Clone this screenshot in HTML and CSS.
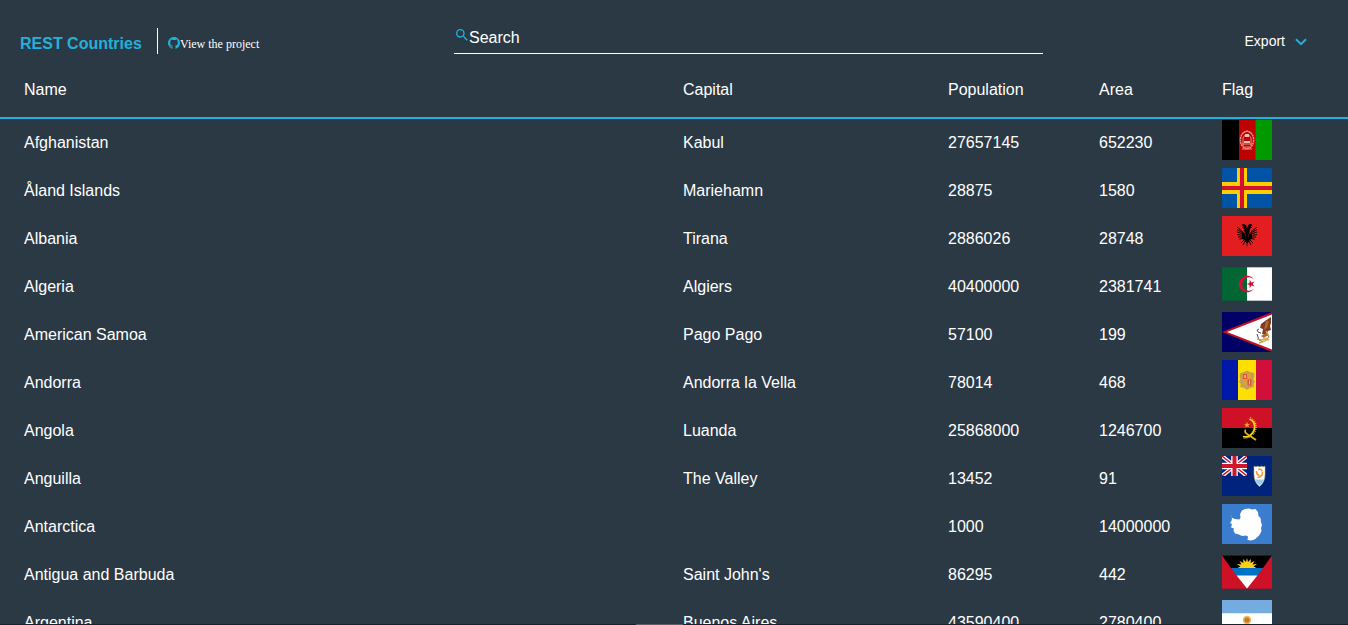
FILE: index.html
```html
<!DOCTYPE html>
<html lang="en">
<head>
<meta charset="utf-8">
<title>REST Countries</title>
<link rel="stylesheet" href="styles.css">
</head>
<body>
<div class="app">
  <header class="topbar">
    <div class="brand">
      <h1 class="title">REST Countries</h1>
      <a class="project"><svg class="github" viewBox="0 0 16 16"><path d="M8 0C3.580 0 0 3.580 0 8c0 3.540 2.290 6.530 5.470 7.590.4.070.55-.17.55-.38v-1.490c-2.010.37-2.530-.49-2.690-.94-.09-.23-.48-.94-.82-1.130-.28-.15-.68-.52-.01-.53.63-.01 1.080.58 1.230.82.72 1.210 1.870.87 2.330.66.070-.52.280-.87.510-1.070-1.780-.2-3.640-.89-3.640-3.950 0-.87.310-1.590.820-2.150-.080-.2-.36-1.020.080-2.120 0 0 .67-.21 2.200.82a7.400 7.400 0 0 1 4 0c1.530-1.040 2.200-.82 2.200-.82.440 1.100.160 1.920.080 2.120.510.560.820 1.270.820 2.150 0 3.070-1.870 3.750-3.650 3.950.290.250.540.730.540 1.480v2.200c0 .21.150.460.550.38A8 8 0 0 0 16 8c0-4.420-3.580-8-8-8z"/></svg><span>View the project</span></a>
    </div>
    <label class="search"><svg class="glass" viewBox="3 3 18 18"><path d="M15.5 14h-.79l-.28-.27A6.47 6.47 0 0 0 16 9.5 6.5 6.5 0 1 0 9.5 16c1.61 0 3.09-.59 4.23-1.57l.27.28v.79l5 4.99L20.49 19zm-6 0a4.5 4.5 0 1 1 0-9 4.5 4.5 0 0 1 0 9z"/></svg><span>Search</span></label>
    <div class="export"><span>Export</span><svg class="chevron" viewBox="0 0 12 8"><path d="M1 1.2l5 5 5-5"/></svg></div>
  </header>
  <div class="row head"><span>Name</span><span>Capital</span><span>Population</span><span>Area</span><span>Flag</span></div>
  <main class="rows">
    <div class="row"><span>Afghanistan</span><span>Kabul</span><span>27657145</span><span>652230</span>
      <svg class="flag" viewBox="0 0 50 40"><path d="M0 0h17v40H0z"/><path fill="#bf0000" d="M17 0h16.500v40H17z"/><path fill="#090" d="M33.500 0H50v40H33.500z"/><g fill="none" stroke="#e58d82"><ellipse cx="25" cy="20" rx="6.600" ry="8.700" stroke-width="1.500" stroke-dasharray="2 .5"/><path d="M21 26V18l2-3h4l2 3v8M20 24h10M22 27h6M21 13l4-2 4 2M20 29h10"/></g><path fill="#efc0b7" d="M23 14h4v3h-4zM22 21h6v2h-6z"/></svg></div>
    <div class="row"><span>Åland Islands</span><span>Mariehamn</span><span>28875</span><span>1580</span>
      <svg class="flag" viewBox="0 0 50 40"><path fill="#0053a5" d="M0 0h50v40H0z"/><path fill="#ffce00" d="M15 0h10v40H15zM0 14h50v12H0z"/><path fill="#d21034" d="M18 0h4v40h-4zM0 18h50v4H0z"/></svg></div>
    <div class="row"><span>Albania</span><span>Tirana</span><span>2886026</span><span>28748</span>
      <svg class="flag" viewBox="0 0 50 40"><path fill="#e41e20" d="M0 0h50v40H0z"/><path d="M25 13l-1-4-3-1.200-1.500 1.700 2 .5-1.500 1.500 2 1 .3 2.500 1.200 4-1 6 2 2 .5 4.500.5-4.500 2-2-1-6 1.200-4 .3-2.500 2-1-1.500-1.500 2-.5L29 7.800 26 9zM20 15l3 3v6l-3-1z M30 15l-3 3v6l3-1z"/><path fill="none" stroke="#000" stroke-width=".9" d="M21 16l-6-5M21 17l-6-3.500M21 18l-6-2M21 19.500l-6-1M21 21h-5M21.500 22l-4 1.300M23 23l-4 4M23 25l-2 4M29 16l6-5M29 17l6-3.500M29 18l6-2M29 19.500l6-1M29 21h5M28.500 22l4 1.300M27 23l4 4M27 25l2 4"/></svg></div>
    <div class="row"><span>Algeria</span><span>Algiers</span><span>40400000</span><span>2381741</span>
      <svg class="flag" viewBox="0 0 50 40"><path fill="#063" d="M0 3.300h25v33.400H0z"/><path fill="#fff" d="M25 3.300h25v33.400H25z"/><path fill="#d21034" d="M32.200 15.800a8.300 8.300 0 1 0 0 8.400 6.700 6.700 0 1 1 0-8.400zM24.500 20l3-1 .2-3.200 1.800 2.600 3-1-1.800 2.600 1.800 2.600-3-1-1.800 2.600-.2-3.200z"/></svg></div>
    <div class="row"><span>American Samoa</span><span>Pago Pago</span><span>57100</span><span>199</span>
      <svg class="flag" viewBox="0 0 50 40"><path fill="#006" d="M0 0h50v40H0z"/><path fill="#bd1021" d="M0 20L50 0v40z"/><path fill="#fff" d="M5 20L50 2.500v35z"/><path fill="#843d20" d="M49 5l-6 4-4 3-1 4 3 1-1 5 4 1 2-4 3-1-1-4 1-3z"/><path fill="#ac682d" d="M44 9h3l-2 7-3 2zM39 24l5-3 2 2-4 3z"/><path fill="none" stroke="#555" d="M37 17l-2 1 1 2 3 1M35 22l2 6 4 2M45 22l2 3"/><path fill="none" stroke="#d6a64a" stroke-width="1.400" d="M35 27l5 1 6-2M37 31l6-2 4-4M44 19l3 5M41 27l6 1"/></svg></div>
    <div class="row"><span>Andorra</span><span>Andorra la Vella</span><span>78014</span><span>468</span>
      <svg class="flag" viewBox="0 0 50 40"><path fill="#0018a8" d="M0 0h16v40H0z"/><path fill="#fedf00" d="M16 0h18v40H16z"/><path fill="#d0103a" d="M34 0h16v40H34z"/><path fill="#c2a05c" d="M18.500 13l3.500-1 3-1.500 3 1.500 4 1 .5 3-1 3 1.500 3-1.500 2 .5 3-4 1-3 2-3-2-4-1 1-3-2-2 1.500-3-1-3z"/><path fill="#df5531" d="M21 14h4v5h-4zM25.500 19.500h4V25l-2 1-2-1z"/><path fill="#e99b38" d="M21 20h3.500v5.500L21 25zM26 14h3v4.500h-3z"/><path fill="#f2c85f" d="M22.300 15h1.500v3h-1.500zM27 20.500h1v4h-1z"/></svg></div>
    <div class="row"><span>Angola</span><span>Luanda</span><span>25868000</span><span>1246700</span>
      <svg class="flag" viewBox="0 0 50 40"><path fill="#ce1126" d="M0 0h50v20H0z"/><path d="M0 20h50v20H0z"/><path fill="none" stroke="#f9d616" stroke-width="1.800" d="M27.500 11c4.500 2 6 6 4.800 10.500C31 26.500 26 30 21 28.500"/><path fill="none" stroke="#f9d616" stroke-dasharray="1 1" d="M28 9.500c6 2.500 7 8 5.700 12.500C32 28 26.500 31 20.500 30"/><path fill="#f9a51f" d="M25 13.700l.8 2.200H28l-1.800 1.400.7 2.300-1.900-1.400-1.900 1.400.7-2.300-1.800-1.400h2.200z"/><path fill="none" stroke="#e2bd1c" stroke-width="1.600" d="M23.500 21.500c-1.500 3 1 4.500 4 6l6.500 4.500"/></svg></div>
    <div class="row"><span>Anguilla</span><span>The Valley</span><span>13452</span><span>91</span>
      <svg class="flag" viewBox="0 0 50 40"><path fill="#00247d" d="M0 0h50v40H0z"/><svg width="25" height="20" viewBox="0 0 25 20"><path stroke="#fff" stroke-width="4" d="M0 0l25 20M25 0L0 20"/><path stroke="#cf142b" stroke-width="1.400" d="M0 0l25 20M25 0L0 20"/><path stroke="#fff" stroke-width="6.500" d="M12.500 0v20M0 10h25"/><path stroke="#cf142b" stroke-width="4" d="M12.500 0v20M0 10h25"/></svg><path fill="#fff" stroke="#b9bb72" stroke-width=".6" d="M32 10.300q2 1 3.500 0 2 1 4 0 2 1 3.500 0v8q0 8-5.500 12.200-5.500-4.200-5.500-12.200z"/><path fill="#9acbec" d="M33 23.500h9q-1.500 3.500-4.500 6.100-3-2.600-4.500-6.100z"/><path fill="none" stroke="#f49a35" stroke-width="1.600" d="M34.500 15q0 4 3 4.500M36 13.500q4-1 4 2M40.500 16q0 5-5 5.500"/></svg></div>
    <div class="row"><span>Antarctica</span><span></span><span>1000</span><span>14000000</span>
      <svg class="flag" viewBox="0 0 50 40"><path fill="#3a7dce" d="M0 0h50v40H0z"/><path fill="#fff" d="M8 10l1.500 3.500L13 15l4.500.5 1-2L18 10l2-3.500L23 5l4-.5 3 1 3.500-.5L36 8l.5 4 2 2 .5 4 1 3-1 3 .5 3-2 4-2 2-3 2.500-3.500 1-3.500-.5.500-3.500-2-1-4 .5-3-1.500-4-1-1.500-3 .5-2-3-1 1-3-2-2 1.500-1.500L10 14z"/></svg></div>
    <div class="row"><span>Antigua and Barbuda</span><span>Saint John's</span><span>86295</span><span>442</span>
      <svg class="flag" viewBox="0 0 50 40"><path fill="#ce1126" d="M0 3.500h50v33.300H0z"/><path d="M0 3.500h50L41 16H9z"/><path fill="#fcd116" d="M25 6l1 4 3-3-.5 4 4-2-2 3.500 4.500-.5-3.500 2.500 3 1.500H15.500l3-1.500-3.500-2.500 4.500.5-2-3.500 4 2L21 7l3 3z"/><path fill="#0072c6" d="M9.200 16h31.600l-5.400 7.500H14.600z"/><path fill="#fff" d="M14.600 23.500h20.800L25 36.500z"/></svg></div>
    <div class="row"><span>Argentina</span><span>Buenos Aires</span><span>43590400</span><span>2780400</span>
      <svg class="flag" viewBox="0 0 50 40"><path fill="#74acdf" d="M0 0h50v40H0z"/><path fill="#fff" d="M0 13.300h50v13.400H0z"/><circle cx="25" cy="20" r="4.200" fill="#e8b765"/><circle cx="25" cy="20" r="2.600" fill="#c77a23"/></svg></div>
  </main>
  <footer class="edge"><span class="edge-mark"></span></footer>
</div>
</body>
</html>
```
FILE: styles.css
```css
* { box-sizing: border-box; }
body { margin: 0; background: #2b3945; color: #fff; font: 16px "Liberation Sans", Arial, sans-serif; }
.app { height: 625px; overflow: hidden; display: flex; flex-direction: column; }
.topbar { height: 65px; flex: none; display: grid; grid-template-columns: 454px 589px 1fr; align-items: start; }
.brand { display: flex; padding: 28px 0 0 20px; }
.title { margin: 0; padding-top: 7px; width: 137px; font-size: 16px; line-height: 18px; color: #22b1dc; white-space: nowrap; }
.project { display: flex; align-items: center; height: 26px; border-left: 1px solid #fff; padding: 6px 0 0 10px; font: 12px "Liberation Serif", "Times New Roman", serif; white-space: nowrap; }
.github { width: 12px; height: 12px; fill: #22b1dc; margin-bottom: 2px; }
.search { display: flex; height: 54px; padding: 22px 0 0 2px; border-bottom: 1px solid #fff; line-height: 32px; }
.glass { width: 12px; height: 12px; margin: 7px 1px 0 0; fill: #22b1dc; }
.export { display: flex; justify-content: flex-end; align-items: center; gap: 10px; padding: 32px 41px 0 0; font-size: 14px; line-height: 18px; }
.chevron { width: 12px; height: 8px; margin-top: 2px; fill: none; stroke: #22b1dc; stroke-width: 2; }
.row { display: grid; grid-template-columns: 659px 265px 151px 123px 50px; height: 48px; padding-left: 24px; line-height: 48px; white-space: nowrap; flex: none; }
.head { height: 54px; line-height: 50px; border-bottom: 2px solid #22b1dc; }
.rows { flex: 1; min-height: 0; overflow: hidden; }
.flag { display: block; width: 50px; height: 40px; margin-top: 1px; }
.edge { flex: none; height: 1px; background: #14232e; padding-left: 636px; }
.edge-mark { display: block; width: 47px; height: 1px; background: #56616c; }
```
